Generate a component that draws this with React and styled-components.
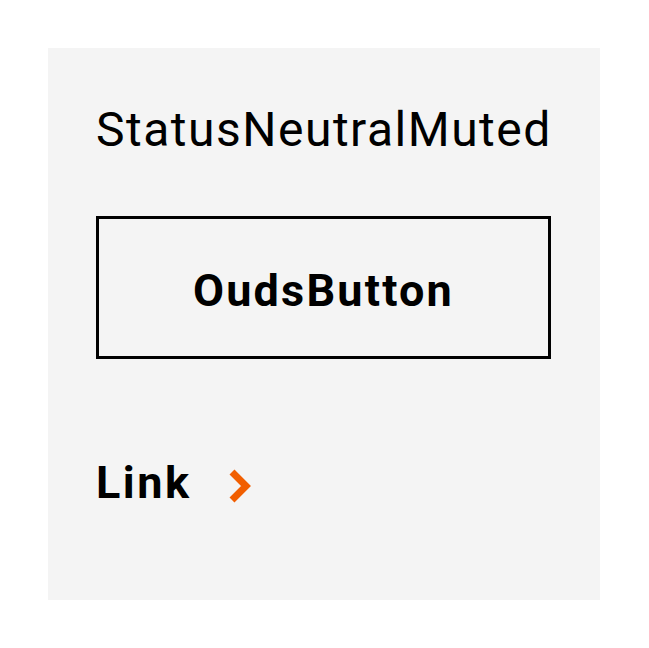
import React from 'react';
import styled, { createGlobalStyle } from 'styled-components';

const GlobalStyle = createGlobalStyle`
    html, body {
        margin: 0;
        padding: 0;
        background: #ffffff;
        font-family: Roboto, "Liberation Sans", sans-serif;
    }
`

const Page = styled.div`
    padding: 48px;
`

const Panel = styled.section`
    width: 552px;
    height: 552px;
    box-sizing: border-box;
    background-color: #f4f4f4;
    padding: 54px 48px 0 48px;
    display: flex;
    flex-direction: column;
    align-items: flex-start;
`

const Title = styled.h2`
    margin: 0;
    font-size: 48px;
    line-height: 56px;
    font-weight: 400;
    letter-spacing: 1.5px;
    color: #000000;
`

const OutlineButton = styled.button`
    margin-top: 58px;
    height: 143px;
    width: 455px;
    box-sizing: border-box;
    padding: 6px 0 0 0;
    background: transparent;
    border: 3px solid #000000;
    font-family: inherit;
    font-size: 45px;
    font-weight: 700;
    letter-spacing: 2.2px;
    color: #000000;
    cursor: pointer;
`

const LinkRow = styled.a`
    margin-top: 97px;
    display: flex;
    align-items: flex-start;
    font-size: 45px;
    line-height: 53px;
    font-weight: 700;
    letter-spacing: 2.5px;
    color: #000000;
    text-decoration: none;
`

const ChevronIcon = styled.svg`
    margin-left: 34px;
    margin-top: 12px;
    flex-shrink: 0;
`

const Chevron = () => (
    <ChevronIcon width="26" height="36" viewBox="0 0 26 36">
        <path d="M6 4 L20 18 L6 32" fill="none" stroke="#f15e00" strokeWidth="7" strokeLinecap="butt" strokeLinejoin="miter" />
    </ChevronIcon>
)

const App = () => {
    return (
        <>
            <GlobalStyle />
            <Page>
                <Panel>
                    <Title>StatusNeutralMuted</Title>
                    <OutlineButton>OudsButton</OutlineButton>
                    <LinkRow href="#">
                        Link
                        <Chevron />
                    </LinkRow>
                </Panel>
            </Page>
        </>
    );
};

export default App;
